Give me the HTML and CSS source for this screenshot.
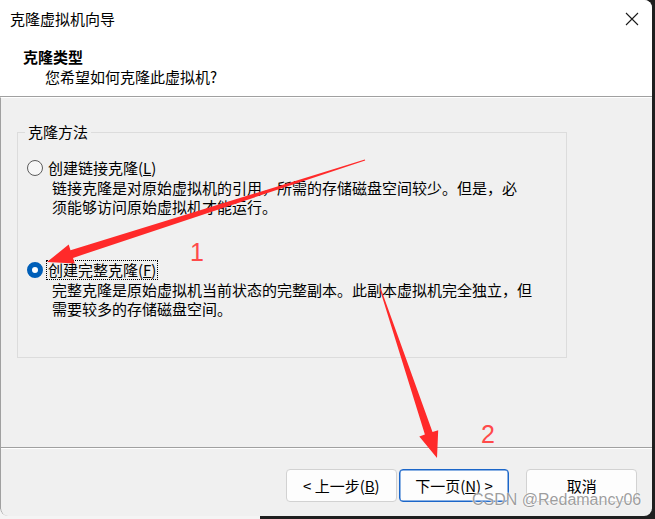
FILE: index.html
```html
<!DOCTYPE html>
<html lang="zh-CN">
<head>
<meta charset="utf-8">
<title>克隆虚拟机向导</title>
<link rel="stylesheet" href="styles.css">
</head>
<body>
<div class="window">
  <div class="header">
    <div class="titlebar">
      <span class="title">克隆虚拟机向导</span>
      <svg class="close" width="14" height="14" viewBox="0 0 14 14"><path d="M1 1 L13 13 M13 1 L1 13" stroke="#1a1a1a" stroke-width="1.1" fill="none"/></svg>
    </div>
    <div class="heading">克隆类型</div>
    <div class="subtitle">您希望如何克隆此虚拟机?</div>
  </div>
  <div class="content">
    <div class="group">
      <div class="legend">克隆方法</div>
      <div class="option first">
        <span class="radio"></span>
        <span class="label">创建链接克隆(<u>L</u>)</span>
      </div>
      <div class="desc">链接克隆是对原始虚拟机的引用，所需的存储磁盘空间较少。但是，必<br>须能够访问原始虚拟机才能运行。</div>
      <div class="option second">
        <span class="radio checked"></span>
        <span class="label focus">创建完整克隆(<u>F</u>)</span>
      </div>
      <div class="desc">完整克隆是原始虚拟机当前状态的完整副本。此副本虚拟机完全独立，但<br>需要较多的存储磁盘空间。</div>
    </div>
  </div>
  <div class="footer">
    <button class="btn">&lt; 上一步(<u>B</u>)</button>
    <button class="btn default">下一页(<u>N</u>) &gt;</button>
    <button class="btn cancel">取消</button>
  </div>
  <div class="watermark">CSDN @Redamancy06</div>
</div>
<svg class="annot" width="655" height="519" viewBox="0 0 655 519">
  <polygon fill="#ff2a2a" points="365.2,160.5 364.8,159.5 70.5,250.3 68.7,244.6 47,262 74.8,263.6 73,257.9"/>
  <polygon fill="#ff2a2a" points="380.5,287.8 379.5,288.2 424.9,434.6 419.3,436.5 437,458 438.2,430.2 432.5,432.1"/>
  <text class="num" x="197" y="261" text-anchor="middle">1</text>
  <text class="num" x="488" y="443" text-anchor="middle">2</text>
</svg>
</body>
</html>
```

FILE: styles.css
```css
html, body {
  margin: 0;
  padding: 0;
}
body {
  width: 655px;
  height: 519px;
  overflow: hidden;
  position: relative;
  background: linear-gradient(to right, #f4f4f4 0, #f4f4f4 260px, #1f1f1f 260px);
  font-family: "Noto Sans CJK SC", "Noto Sans", sans-serif;
  font-size: 15px;
  color: #000;
}
.window {
  position: relative;
  width: 652px;
  height: 516px;
  background: #f0f0f0;
  border-radius: 0 8px 8px 8px;
  overflow: hidden;
  display: flex;
  flex-direction: column;
}
.header {
  background: #fff;
  height: 96px;
  border-bottom: 1px solid #a0a0a0;
  flex: none;
}
.titlebar {
  height: 38px;
  display: flex;
  align-items: center;
  justify-content: space-between;
  padding: 0 13px 0 10px;
}
.title {
  line-height: 20px;
}
.close {
  display: block;
}
.heading {
  margin-top: 9px;
  padding-left: 23px;
  line-height: 20px;
  font-weight: bold;
}
.subtitle {
  padding-left: 45px;
  line-height: 20px;
}
.content {
  flex: none;
  border-top: 1px solid #fff;
  border-left: 1px solid #a0a0a0;
  padding-top: 34px;
  padding-left: 16px;
  box-sizing: border-box;
  height: 350px;
}
.group {
  width: 550px;
  height: 226px;
  box-sizing: border-box;
  border: 1px solid #dcdcdc;
  padding-left: 7px;
}
.legend {
  margin-top: -11px;
  width: fit-content;
  padding: 0 3px;
  background: #f0f0f0;
  line-height: 20px;
}
.option {
  display: flex;
  align-items: center;
  height: 20px;
  padding-left: 2px;
  gap: 5px;
}
.option.first {
  margin-top: 16px;
}
.option.second {
  margin-top: 44px;
}
.radio {
  width: 16px;
  height: 16px;
  box-sizing: border-box;
  border-radius: 50%;
  border: 1px solid #5c5c5c;
  background: #f7f7f7;
  flex: none;
}
.radio.checked {
  border: 5px solid #005fb8;
  background: #fff;
}
.label {
  line-height: 18px;
}
.label.focus {
  outline: 1px dotted #000;
  outline-offset: 0;
  margin-left: -1px;
  padding: 0 1px;
}
.desc {
  padding-left: 27px;
  line-height: 19px;
  white-space: nowrap;
}
.footer {
  flex: 1;
  border-top: 1px solid #a0a0a0;
  box-shadow: inset 0 1px 0 #fff;
  display: flex;
  align-items: flex-start;
  padding: 21px 15px 0 285px;
  gap: 2px;
  border-left: 1px solid #a0a0a0;
  border-radius: 0 0 8px 8px;
}
.btn {
  width: 111px;
  height: 33px;
  box-sizing: border-box;
  background: #fdfdfd;
  border: 1px solid #d2d2d2;
  border-radius: 4px;
  font-family: "Noto Sans CJK SC", "Noto Sans", sans-serif;
  font-size: 15px;
  color: #000;
  padding: 0;
  line-height: 20px;
}
.btn.default {
  border-color: #1b66c9;
  box-shadow: inset 0 0 0 0.5px #1b66c9;
}
.btn.cancel {
  margin-left: 15px;
}
.watermark {
  position: absolute;
  left: 472px;
  top: 491px;
  font-family: "Liberation Sans", Arial, sans-serif;
  font-size: 16px;
  line-height: 18px;
  color: rgba(140, 140, 140, 0.85);
  text-shadow: 0 0 2px #fff, 0 0 1px #fff;
}
.annot {
  position: absolute;
  left: 0;
  top: 0;
  pointer-events: none;
}
.num {
  font-family: "Liberation Sans", Arial, sans-serif;
  font-size: 25px;
  fill: #ff4a4a;
}
```
